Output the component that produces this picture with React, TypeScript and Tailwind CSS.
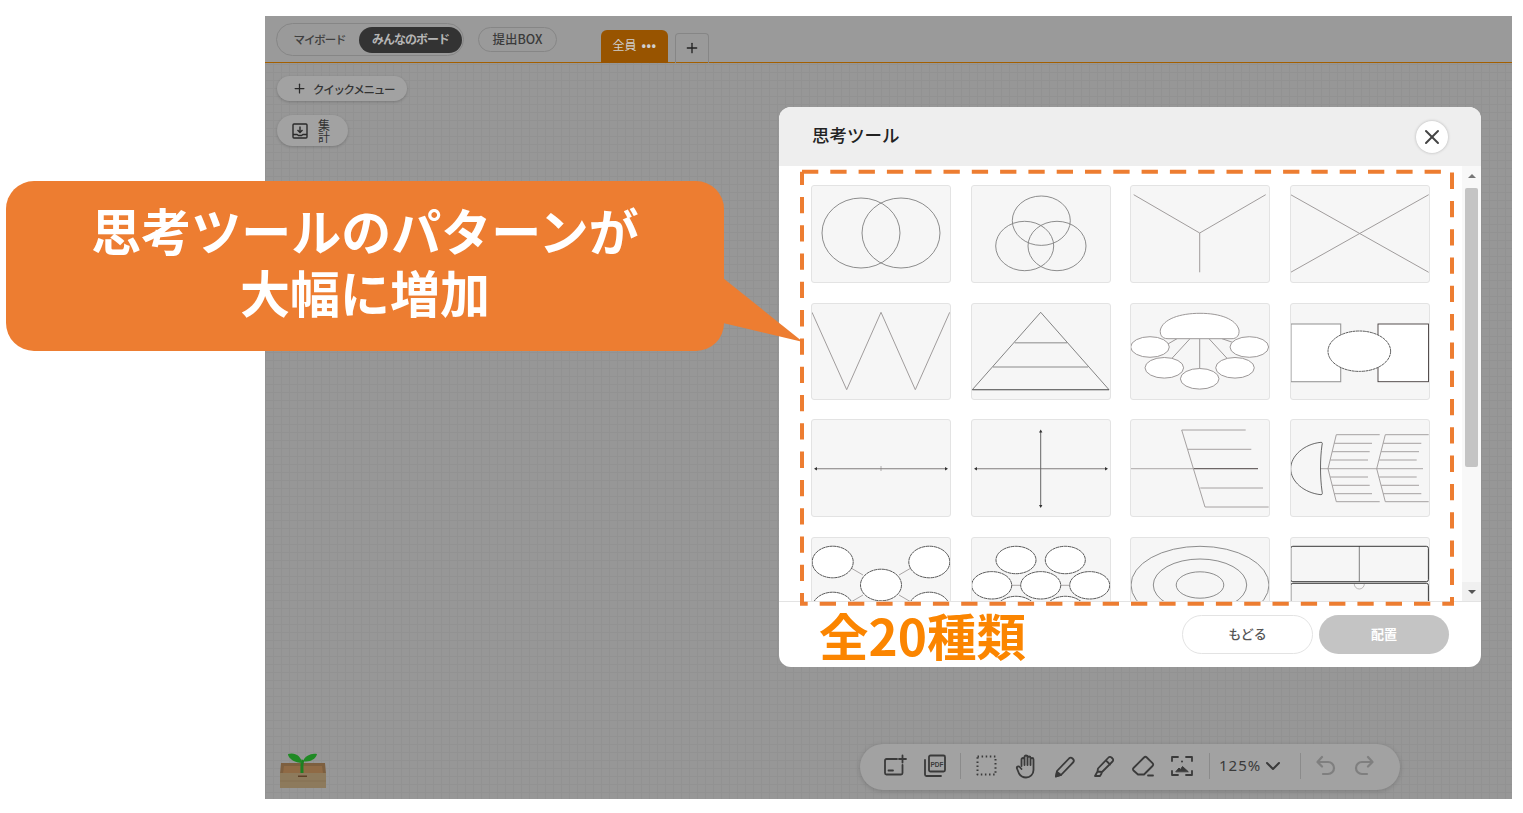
import React from 'react';
import { ChevronDown, Plus, X } from 'lucide-react';

const jp = "font-['Noto_Sans_CJK_JP','Noto_Sans',sans-serif]";

const Venn = () => (
  <g fill="none" stroke="#808080" strokeWidth="0.9">
    <ellipse cx="50" cy="48" rx="39" ry="35" />
    <ellipse cx="90" cy="48" rx="39" ry="35" />
  </g>
);

const Triple = () => (
  <g fill="none" stroke="#808080" strokeWidth="0.9">
    <ellipse cx="70.3" cy="35.7" rx="29" ry="24.7" />
    <ellipse cx="53.7" cy="61" rx="29" ry="24.7" />
    <ellipse cx="86" cy="61" rx="29" ry="24.7" />
  </g>
);

const YChart = () => (
  <g fill="none" stroke="#a09c9c" strokeWidth="1">
    <path d="M3.7 9.7 69.7 48 135.7 9.7M69.7 48V87.300" />
  </g>
);

const XChart = () => (
  <path d="M.7 9.7 138.700 87.300M138.700 9.7.7 87.300" fill="none" stroke="#a09c9c" strokeWidth="1" />
);

const WChart = () => (
  <path d="M1 9.300 35.700 86.700 70 9.300 104.300 86.700 138.700 9.300" fill="none" stroke="#a09c9c" strokeWidth="1" />
);

const Pyramid = () => (
  <g fill="none">
    <path d="M43.700 39.700H96M22 64H117" stroke="#aeaeae" strokeWidth="1.400" />
    <path d="M1.300 86.700 69.700 9.300 138 86.700" stroke="#666" strokeWidth="0.8" />
    <path d="M1.300 86.700H138" stroke="#444" strokeWidth="1.100" />
  </g>
);

const Hub = () => (
  <g fill="#fff" stroke="#9c9898" strokeWidth="1">
    <path d="M47 35.700 31 45M60 35.700 34 64M69.700 35.700V72M79 35.700 105 64M92 35.700 119 45" fill="none" />
    <path d="M38 35.700C31 35.700 30 31 30.300 27 33 16 50 10.300 70 10.300S106 16 109 27C109.500 32 107 35.700 102 35.700Z" />
    <ellipse cx="20" cy="44" rx="19.300" ry="10.300" />
    <ellipse cx="34.300" cy="64.800" rx="19.300" ry="10.300" />
    <ellipse cx="69.700" cy="75.800" rx="19.300" ry="10.300" />
    <ellipse cx="105" cy="64.800" rx="19.300" ry="10.300" />
    <ellipse cx="119.300" cy="44" rx="19.300" ry="10.300" />
  </g>
);

const TwoBoxes = () => (
  <g fill="#fff">
    <rect x="1" y="21" width="49.700" height="57.700" stroke="#999" strokeWidth="1.100" />
    <rect x="88" y="21" width="50.500" height="57.700" stroke="#443c3c" strokeWidth="0.900" />
    <ellipse cx="69.300" cy="48.200" rx="31.300" ry="20.200" stroke="#333" strokeWidth="0.800" strokeDasharray="3 0.500" />
  </g>
);

const Arrow = ({ points }: { points: string }) => <polygon points={points} fill="#333" />;

const Line = () => (
  <g>
    <path d="M4 49.700H136" stroke="#807c7c" strokeWidth="1.100" />
    <path d="M70 47V52" stroke="#807c7c" strokeWidth="0.600" />
    <Arrow points="3,49.700 6,48 6,51.400" />
    <Arrow points="137,49.700 134,48 134,51.400" />
  </g>
);

const Cross = () => (
  <g>
    <path d="M4 49.700H136" stroke="#807c7c" strokeWidth="1.100" />
    <path d="M69.700 12V88" stroke="#666" strokeWidth="1" />
    <Arrow points="3,49.700 6,48 6,51.400" />
    <Arrow points="137,49.700 134,48 134,51.400" />
    <Arrow points="69.700,10.500 68,13.500 71.400,13.500" />
    <Arrow points="69.700,89 68,86 71.400,86" />
  </g>
);

const Fish = () => (
  <g fill="none">
    <path d="M.7 49.700H64" stroke="#aaa7a7" strokeWidth="1" />
    <path d="M64 49.700H128" stroke="#6d6666" strokeWidth="1.200" />
    <path d="M51.700 11 75 88M51.700 11H115.700M58 30.300H121.300M70.300 69H133M75 88H138.700" stroke="#9c9797" strokeWidth="0.900" />
  </g>
);

const BigFish = () => (
  <g fill="none">
    <path d="M30 49.700H133" stroke="#aaa7a7" strokeWidth="1" />
    <path
      d="M46.300 15.700 38 49.700 46.300 82.700M95.300 15.700 86.700 49.700 95.300 82.700M46.300 15.700H89.700M44.300 24.300H82M42.300 32.700H79.700M40.300 41H78M40.300 58H78M42.300 66.300H79.700M44.300 74.700H82M46.300 82.700H89.700M95.300 15.700H138.700M93.300 24.300H131.300M91.300 32.700H129M89.300 41H126.700M89.300 58H126.700M91.300 66.300H129M93.300 74.700H131.300M95.300 82.700H138.700"
      stroke="#9c9797"
      strokeWidth="0.900"
    />
    <path
      d="M31 23.300C14 25 .7 37 .7 49.700S14 74 31 75.700C32.500 75.700 32.500 74 32 72 30 58 30 40 32 26 32.500 24.500 32.500 23.300 31 23.300Z"
      fill="#f6f6f6"
      stroke="#444"
      strokeWidth="0.800"
    />
  </g>
);

const Web = () => (
  <g fill="#fff">
    <path d="M40 31 52 38M88 38 100 31M40 65 52 58M88 58 100 65" stroke="#a09c9c" strokeWidth="0.900" />
    {[
      [21.700, 25],
      [118.300, 25],
      [70, 48],
      [21.700, 71],
      [118.300, 71],
    ].map(([cx, cy], i) => (
      <ellipse key={i} cx={cx} cy={cy} rx="20.500" ry="15.800" stroke="#2e2e2e" strokeWidth="0.800" strokeDasharray="3.500 0.400" />
    ))}
  </g>
);

const Bubbles = () => (
  <g fill="#fff">
    <path d="M40 48.300H50M90 48.300H98" stroke="#a09c9c" strokeWidth="0.900" />
    {[
      [45, 23],
      [94.300, 23],
      [20.700, 48.300],
      [69.700, 48.300],
      [118.700, 48.300],
      [45, 73],
      [94.300, 73],
    ].map(([cx, cy], i) => (
      <ellipse key={i} cx={cx} cy={cy} rx="20" ry="13.700" stroke="#2e2e2e" strokeWidth="0.800" strokeDasharray="3.500 0.400" />
    ))}
  </g>
);

const Rings = () => (
  <g fill="none" stroke="#808080" strokeWidth="0.900">
    <ellipse cx="70" cy="48" rx="69" ry="38.700" />
    <ellipse cx="70" cy="48" rx="46.700" ry="26" />
    <ellipse cx="70" cy="48" rx="23.800" ry="13.200" />
  </g>
);

const Frames = () => (
  <g fill="none">
    <path d="M69.300 9.300V44.700" stroke="#808080" strokeWidth="1" />
    <path d="M64.300 47A5 5 0 0 0 74.300 47" stroke="#a09c9c" strokeWidth="0.700" />
    <rect x="0.800" y="9.300" width="137.600" height="35.400" rx="2" stroke="#222" strokeWidth="0.900" />
    <rect x="0.800" y="46.300" width="137.600" height="48" rx="2" stroke="#222" strokeWidth="0.900" />
  </g>
);

const diagrams = [Venn, Triple, YChart, XChart, WChart, Pyramid, Hub, TwoBoxes, Line, Cross, Fish, BigFish, Web, Bubbles, Rings, Frames];

const ToolIcon = ({ children, w = 26 }: { children: React.ReactNode; w?: number }) => (
  <svg width={w} height="26" viewBox="0 0 26 26" fill="none" stroke="#3a3a3a" strokeWidth="1.800" strokeLinecap="round" strokeLinejoin="round">
    {children}
  </svg>
);

const Toolbar = () => (
  <div className="absolute left-[595px] bottom-[9px] w-[540px] h-[46px] rounded-[23px] bg-[#a2a2a2] shadow-[0_1px_5px_rgba(0,0,0,0.18)] flex items-center pl-[22px] pb-[3px]">
    <div className="flex items-center gap-[13px]">
      <ToolIcon>
        <path d="M15 6H4.500A1.500 1.500 0 0 0 3 7.500V20a1.500 1.500 0 0 0 1.500 1.500H19a1.500 1.500 0 0 0 1.500-1.500V12M6.500 17.500h4.500M20.500 2.500v7M17 6h7" />
      </ToolIcon>
      <ToolIcon>
        <path d="M4 7v14.500a1.500 1.500 0 0 0 1.500 1.500H20" />
        <rect x="8" y="2.500" width="16" height="16" rx="1.500" />
        <text x="16" y="13.500" textAnchor="middle" fontSize="6.500" fontWeight="700" fill="#3a3a3a" stroke="none" fontFamily="'Liberation Sans',sans-serif">PDF</text>
      </ToolIcon>
    </div>
    <div className="w-px h-[26px] bg-[#8b8b8b] ml-[13px] mr-[13px]" />
    <div className="flex items-center gap-[13px]">
      <ToolIcon>
        <rect x="3.500" y="3.500" width="18" height="18" strokeDasharray="1.500 2.600" strokeLinecap="butt" strokeWidth="2" />
      </ToolIcon>
      <ToolIcon>
        <path d="M8.500 13V6.500a1.500 1.500 0 0 1 3 0V4a1.500 1.500 0 0 1 3 0v1a1.500 1.500 0 0 1 3 0v1.500a1.500 1.500 0 0 1 3 0V17a7.500 7.500 0 0 1-7.500 7.500c-3.500 0-5.500-1.500-7-4L4 15.500c-.8-1.500 1.500-3 2.700-1.500L8.500 16M11.500 6.500V12M14.500 4.500V12M17.500 6V12" />
      </ToolIcon>
      <ToolIcon>
        <path d="M5 18 17 5.500a2.500 2.500 0 0 1 3.500 0l.5.500a2.500 2.500 0 0 1 0 3.500L9 22l-5 1.500Z" />
        <path d="M4 23.500 5 19l4 3Z" fill="#3a3a3a" />
      </ToolIcon>
      <ToolIcon>
        <path d="M7 15.500 17.500 4.500a2 2 0 0 1 3 0l1 1a2 2 0 0 1 0 3L11 19l-4.500-.5ZM15 7.500l4 4M6.500 18.500 4 23h5l1.500-2.500" />
      </ToolIcon>
      <ToolIcon>
        <path d="M3.500 15 14 4.500a2 2 0 0 1 2.800 0l5.700 5.700a2 2 0 0 1 0 2.800L14 21.500H8L3.500 17.500a1.700 1.700 0 0 1 0-2.500Z" />
        <path d="M18 22.500h5" />
      </ToolIcon>
      <ToolIcon>
        <path d="M3 8V4h6M17 4h6v4M23 18v4h-6M9 22H3v-4" />
        <circle cx="13" cy="8.500" r="1" fill="#3a3a3a" stroke="none" />
        <path d="M7 18.500 10 15l1.500 1.500L13.500 13.500 19 18.500Z" fill="#3a3a3a" strokeWidth="1" />
      </ToolIcon>
    </div>
    <div className="w-px h-[26px] bg-[#8b8b8b] ml-[14px] mr-[9px]" />
    <span className="text-[15px] tracking-[1px] text-[#3a3a3a] font-['Noto_Sans',sans-serif]">125%</span>
    <ChevronDown size={24} strokeWidth={2} className="text-[#3a3a3a]" />
    <div className="w-px h-[26px] bg-[#8b8b8b] ml-[15px] mr-[13px]" />
    <div className="flex items-center gap-[14px]">
      <svg width="24" height="24" viewBox="0 0 24 24" fill="none" stroke="#7f7f7f" strokeWidth="2.200" strokeLinecap="round" strokeLinejoin="round">
        <path d="M8 3 3.500 8 8 12.500M4 8h10a6 6 0 0 1 0 12H9" />
      </svg>
      <svg width="24" height="24" viewBox="0 0 24 24" fill="none" stroke="#7f7f7f" strokeWidth="2.200" strokeLinecap="round" strokeLinejoin="round">
        <path d="M16 3l4.500 5-4.500 4.500M20 8H10a6 6 0 0 0 0 12h5" />
      </svg>
    </div>
  </div>
);

const Sprout = () => (
  <svg className="absolute left-[14px] bottom-[11px]" width="48" height="36" viewBox="0 0 48 36">
    <path d="M2 11H46L47 22H1Z" fill="#7d5f3f" />
    <path d="M5 14H43L44 21H4Z" fill="#8f6a45" />
    <path d="M1 21H47V36H1Z" fill="#8d7a5c" />
    <path d="M1 29H47" stroke="#857152" strokeWidth="1" />
    <rect x="19" y="23.500" width="9" height="1.500" fill="#5c3f26" />
    <path d="M23 21C23 15 22.500 11 24 8" stroke="#1d7f22" strokeWidth="3" fill="none" />
    <path d="M23 11C17 11 9 7 9 2 16 0 22 4 23 11Z" fill="#1f8a24" />
    <path d="M24 9C26 4 32 1 38 2 37 7 30 11 24 9Z" fill="#1f8a24" />
  </svg>
);

const Modal = () => (
  <div className="absolute left-[514px] top-[91px] w-[702px] h-[560px] rounded-[12px] bg-white overflow-hidden flex flex-col">
    <div className="h-[59px] shrink-0 bg-[#eeeeee] flex items-center justify-between pl-[33px] pr-[33px]">
      <span className="text-[17.500px] font-medium text-[#222] -mt-[2px]">思考ツール</span>
      <div className="w-[32px] h-[32px] rounded-full bg-white shadow-[0_0_3px_rgba(0,0,0,0.25)] flex items-center justify-center">
        <X size={24} strokeWidth={2} className="text-[#444]" />
      </div>
    </div>
    <div className="flex-1 min-h-0 flex">
      <div className="flex-1 overflow-hidden pl-[32px] pt-[19px]">
        <div className="grid grid-cols-[repeat(4,140px)] grid-rows-[98px_97px_98px_98px] gap-x-[19.500px] gap-y-[19.500px]">
          {diagrams.map((Diagram, i) => (
            <div key={i} className="w-[140px] h-full bg-[#f6f6f6] border border-[#e3e3e3] rounded-[3px] overflow-hidden">
              <svg className="-m-px block" width="140" height="98" viewBox="0 0 140 98">
                <Diagram />
              </svg>
            </div>
          ))}
        </div>
      </div>
      <div className="w-[19px] shrink-0 bg-[#f8f8f8] flex flex-col items-center">
        <div className="h-[19px] w-full flex items-center justify-center">
          <div className="w-0 h-0 border-x-[4px] border-x-transparent border-b-[4px] border-b-[#777]" />
        </div>
        <div className="mt-[3px] w-[13px] h-[279px] rounded-[2px] bg-[#c4c4c4]" />
        <div className="mt-auto h-[19px] w-full bg-[#f0f0f0] flex items-center justify-center">
          <div className="w-0 h-0 border-x-[4px] border-x-transparent border-t-[4px] border-t-[#555]" />
        </div>
      </div>
    </div>
    <div className="h-[66px] shrink-0 border-t border-[#e3e3e3] flex items-center justify-end gap-[6px] pr-[32px]">
      <div className="w-[131px] h-[39px] rounded-[20px] border border-[#e3e3e3] bg-white flex items-center justify-center text-[13px] font-medium text-[#555] pb-[1px]">もどる</div>
      <div className="w-[130px] h-[39px] rounded-[20px] bg-[#c4c4c4] flex items-center justify-center text-[13px] font-bold text-white pb-[1px]">配置</div>
    </div>
  </div>
);

export default function App() {
  return (
    <div className={`relative w-[1523px] h-[813px] bg-white overflow-hidden ${jp}`}>
      <div className="absolute left-[265px] top-[16px] w-[1247px] h-[783px] bg-[#979797] bg-[linear-gradient(#929292_1px,transparent_1px),linear-gradient(90deg,#929292_1px,transparent_1px)] bg-[size:8px_8px] flex flex-col">
        {/* top bar */}
        <div className="h-[47px] shrink-0 bg-[#9a9a9a] border-b border-[#a35f00] flex items-start pl-[11px] relative">
          <div className="mt-[7px] w-[188px] h-[33px] rounded-full border border-[#868686] flex items-center pl-[3px]">
            <span className="w-[79px] text-center text-[11.500px] tracking-[-1.100px] leading-[14px] font-medium text-[#3f3f3f] -mt-[2px]">マイボード</span>
            <span className="w-[103px] h-[26px] rounded-full bg-[#333333] flex items-center justify-center text-[12px] tracking-[-1px] leading-[14px] font-bold text-[#b5b5b5] pb-[2px]">みんなのボード</span>
          </div>
          <div className="ml-[14px] mt-[11px] w-[79px] h-[25px] rounded-full border border-[#868686] flex items-center justify-center text-[12.500px] leading-[16px] font-medium text-[#3a3a3a] pb-[2px]">提出BOX</div>
          <div className="ml-[44px] mt-[14px] w-[67px] h-[33px] rounded-t-[6px] bg-[#985400] flex items-center justify-center gap-[5px] text-[12px] leading-[14px] text-[#cfcfcf] pb-[3px]">
            <span>全員</span>
            <span className="text-[12px] font-bold tracking-[0.500px]">•••</span>
          </div>
          <div className="ml-[7px] mt-[17px] w-[34px] h-[30px] rounded-t-[4px] border border-b-0 border-[#868686] flex items-center justify-center pb-[1px]">
            <Plus size={16} strokeWidth={2} className="text-[#222]" />
          </div>
        </div>

        {/* quick actions */}
        <div className="flex flex-col items-start pl-[12px] pt-[13px] gap-[14px]">
          <div className="w-[130px] h-[25px] rounded-full bg-[#a2a2a2] shadow-[0_1px_3px_rgba(0,0,0,0.2)] flex items-center pl-[15px] gap-[6px]">
            <Plus size={15} strokeWidth={2} className="text-[#2a2a2a]" />
            <span className="text-[11.500px] tracking-[-1.300px] leading-[14px] font-medium text-[#333]">クイックメニュー</span>
          </div>
          <div className="w-[71px] h-[31px] rounded-full bg-[#a2a2a2] shadow-[0_1px_3px_rgba(0,0,0,0.2)] flex items-center pl-[15px] gap-[10px]">
            <svg width="16" height="16" viewBox="0 0 16 16" fill="none" stroke="#2a2a2a" strokeWidth="1.400">
              <rect x="1" y="1" width="14" height="14" rx="1" />
              <path d="M8 3.500V9M5.500 7 8 9.500 10.500 7M1 11.500H5L6.500 12.500H9.500L11 11.500H15" />
            </svg>
            <span className="w-[12px] text-[12px] leading-[12px] text-[#333] text-center">集計</span>
          </div>
        </div>

        <Sprout />
        <Toolbar />
        <Modal />
      </div>

      {/* annotations on top of the screenshot */}
      <svg className="absolute left-[795px] top-[165px]" width="665" height="445" fill="none">
        <path d="M7 6.700H657V438.700H7V6.700" stroke="#ed7d31" strokeWidth="4" strokeDasharray="16.300 12" />
      </svg>
      <svg className="absolute left-[715px] top-[270px]" width="95" height="80">
        <polygon points="8,8 88,72 8,53" fill="#ed7d31" />
      </svg>
      <div className="absolute left-[6px] top-[181px] w-[718px] h-[170px] rounded-[28px] bg-[#ed7d31] pt-[17px] text-center text-white text-[50px] font-bold leading-[62px]">
        思考ツールのパターンが
        <br />
        大幅に増加
      </div>
      <div className="absolute left-[819px] top-[599px] text-[#fb8500] text-[49.500px] font-bold leading-[72px]">全20種類</div>
    </div>
  );
}
